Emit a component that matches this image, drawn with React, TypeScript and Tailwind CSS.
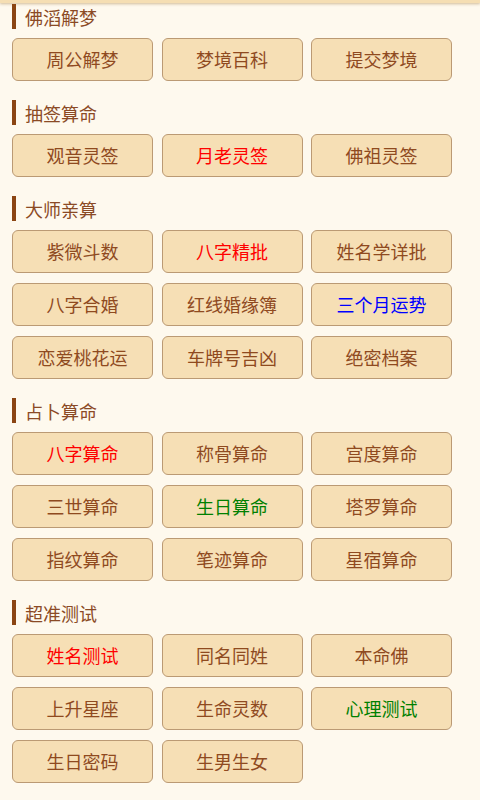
import React from "react";

type Item = { label: string; color?: string };

const sections: { title: string; items: Item[] }[] = [
  {
    title: "佛滔解梦",
    items: [{ label: "周公解梦" }, { label: "梦境百科" }, { label: "提交梦境" }],
  },
  {
    title: "抽签算命",
    items: [
      { label: "观音灵签" },
      { label: "月老灵签", color: "text-[#ff0000]" },
      { label: "佛祖灵签" },
    ],
  },
  {
    title: "大师亲算",
    items: [
      { label: "紫微斗数" },
      { label: "八字精批", color: "text-[#ff0000]" },
      { label: "姓名学详批" },
      { label: "八字合婚" },
      { label: "红线婚缘簿" },
      { label: "三个月运势", color: "text-[#0000ff]" },
      { label: "恋爱桃花运" },
      { label: "车牌号吉凶" },
      { label: "绝密档案" },
    ],
  },
  {
    title: "占卜算命",
    items: [
      { label: "八字算命", color: "text-[#ff0000]" },
      { label: "称骨算命" },
      { label: "宫度算命" },
      { label: "三世算命" },
      { label: "生日算命", color: "text-[#008000]" },
      { label: "塔罗算命" },
      { label: "指纹算命" },
      { label: "笔迹算命" },
      { label: "星宿算命" },
    ],
  },
  {
    title: "超准测试",
    items: [
      { label: "姓名测试", color: "text-[#ff0000]" },
      { label: "同名同姓" },
      { label: "本命佛" },
      { label: "上升星座" },
      { label: "生命灵数" },
      { label: "心理测试", color: "text-[#008000]" },
      { label: "生日密码" },
      { label: "生男生女" },
    ],
  },
];

const App: React.FC = () => {
  return (
    <div className="min-h-[800px] w-[480px] bg-[#fef9ee] font-['Noto_Sans_CJK_SC','Noto_Sans',sans-serif] overflow-hidden">
      <div className="h-[3px] bg-[#f5deb3] shadow-[0_1px_3px_rgba(160,120,60,0.5)]" />
      <div className="pt-[1px]">
        {sections.map((s, i) => (
          <div key={s.title} className={i === 0 ? "" : "mt-[19px]"}>
            <div className="flex items-center h-[25px] pl-3">
              <div className="w-[4px] h-[25px] bg-[#8b4513]" />
              <span className="ml-[9px] text-[18px] leading-none text-[#8b4a25]">{s.title}</span>
            </div>
            <div className="mt-[9px] pl-3 grid grid-cols-[141px_141px_141px] gap-x-[8.5px] gap-y-[10px]">
              {s.items.map((it) => (
                <div
                  key={it.label}
                  className={`h-[43px] flex items-center justify-center rounded-[6px] border border-[#bb9a74] bg-[#f6dfb5] text-[18px] ${it.color ?? "text-[#8f4a1f]"}`}
                >
                  {it.label}
                </div>
              ))}
            </div>
          </div>
        ))}
      </div>
    </div>
  );
};

export default App;
